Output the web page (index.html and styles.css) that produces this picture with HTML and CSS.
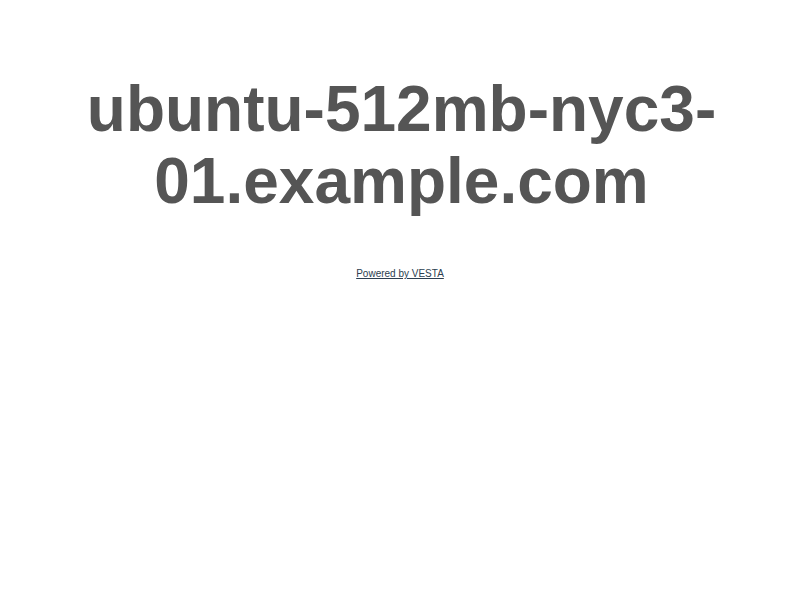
FILE: index.html
```html
<!DOCTYPE html>
<html lang="en">
<head>
  <meta charset="UTF-8">
  <meta name="viewport" content="width=device-width, initial-scale=1.0">
  <title>ubuntu-512mb-nyc3-01.example.com</title>
  <link rel="stylesheet" href="styles.css">
</head>
<body>
  <!-- Default page of the host -->
  <div class="wrapper">
    <h1 class="host">ubuntu-512mb-nyc3-01.example.com</h1>
    <a class="powered" href="#">Powered by VESTA</a>
  </div>
</body>
</html>
```

FILE: styles.css
```css
/* General layout */
body {
  margin: 0;
  font-family: "Liberation Sans", Arial, Helvetica, sans-serif;
  background-color: #fff;
  color: #555;
}

.wrapper {
  width: 640px;
  margin: 0 auto;
  padding-top: 73px;
  text-align: center;
}

/* Host name */
.host {
  margin: 0 0 0 3px;
  font-size: 64px;
  font-weight: bold;
  line-height: 72px;
  word-wrap: break-word;
}

/* Footer link */
.powered {
  display: inline-block;
  margin-top: 51px;
  font-size: 10px;
  color: #2c3e50;
}
```
